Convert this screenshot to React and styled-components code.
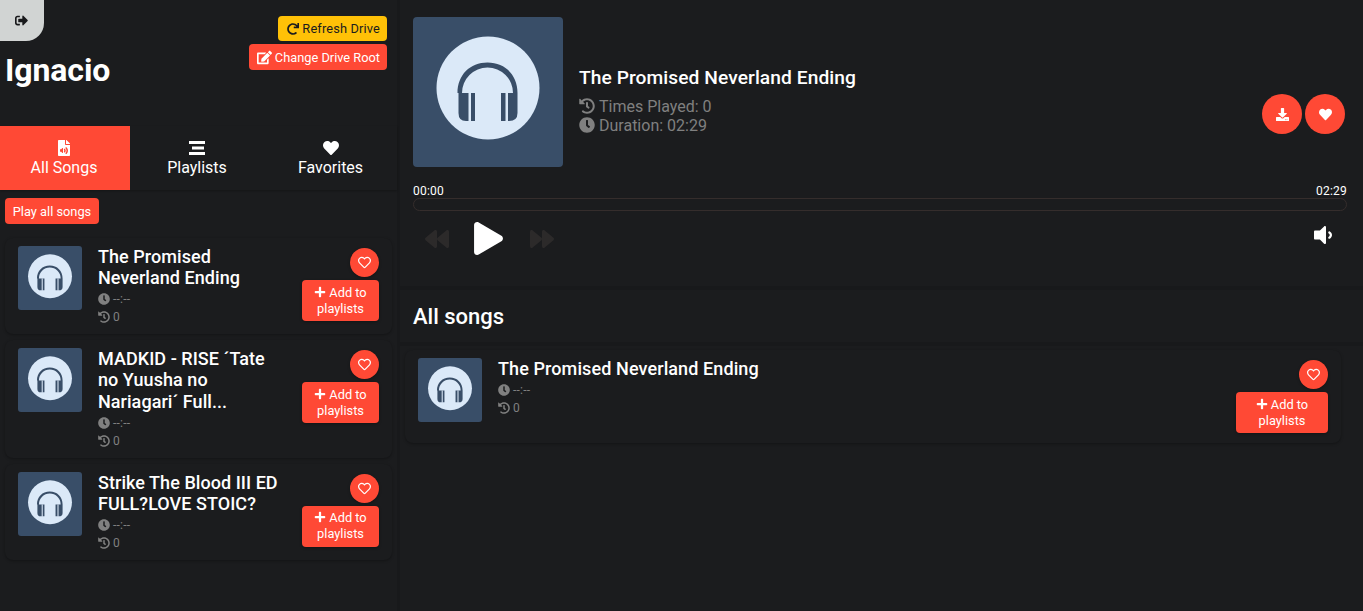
import React from "react";
import styled, { createGlobalStyle } from "styled-components";
import {
  FaBackward,
  FaClock,
  FaDownload,
  FaEdit,
  FaFileAudio,
  FaForward,
  FaHeart,
  FaHistory,
  FaPlay,
  FaPlus,
  FaRedo,
  FaRegHeart,
  FaSignOutAlt,
  FaVolumeDown,
} from "react-icons/fa";

const ACCENT = "#ff4935";
const MUTED = "#808080";
const PANEL = "#1b1c1e";
const COVER = "#394e68";
const COVER_LIGHT = "#dbe9f8";

const GlobalStyle = createGlobalStyle`
  html, body {
    margin: 0;
    height: 100%;
    background: ${PANEL};
    font-family: Roboto, "Liberation Sans", sans-serif;
    color: #fff;
    overflow: hidden;
  }
  * { box-sizing: border-box; }
`;

const Shell = styled.div`
  display: grid;
  grid-template-columns: 397px 1fr;
  gap: 3px;
  height: 611px;
  background: #18191b;
`;

const Sidebar = styled.aside`
  background: ${PANEL};
  min-width: 0;
`;

const Main = styled.main`
  background: #18191b;
  display: flex;
  flex-direction: column;
  gap: 4px;
  min-width: 0;
`;

const SideHeader = styled.header`
  height: 126px;
  display: flex;
  justify-content: space-between;
`;

const UserBlock = styled.div`
  display: flex;
  flex-direction: column;
`;

const LogoutButton = styled.button`
  width: 44px;
  height: 41px;
  border: 0;
  padding: 0 2px 1px 0;
  border-bottom-right-radius: 18px;
  background: #d1d4d3;
  color: #18191b;
  display: flex;
  align-items: center;
  justify-content: center;
  font-size: 13px;
`;

const UserName = styled.h1`
  margin: 10px 0 0 5px;
  font-size: 32px;
  line-height: 38px;
  font-weight: 700;
  letter-spacing: -0.1px;
`;

const DriveActions = styled.div`
  display: flex;
  flex-direction: column;
  align-items: flex-end;
  gap: 3px;
  padding: 16px 10px 0 0;
`;

const DriveButton = styled.button`
  height: ${(p) => (p.$warning ? 25 : 26)}px;
  border: 0;
  border-radius: 4px;
  padding: 0 7px 0 ${(p) => (p.$warning ? 9 : 8)}px;
  display: flex;
  align-items: center;
  gap: 3px;
  font: 400 12.8px Roboto, sans-serif;
  letter-spacing: ${(p) => (p.$warning ? 0.15 : 0)}px;
  background: ${(p) => (p.$warning ? "#ffc107" : ACCENT)};
  color: ${(p) => (p.$warning ? PANEL : "#fff")};
  svg { font-size: ${(p) => (p.$warning ? 12 : 15)}px; }
`;

const Tabs = styled.nav`
  display: grid;
  grid-template-columns: 130px 134px 133px;
  height: 64px;
  box-shadow: 0 1px 2px rgba(0, 0, 0, 0.25);
`;

const Tab = styled.div`
  display: flex;
  flex-direction: column;
  align-items: center;
  padding-top: 14px;
  padding-right: ${(p) => (p.$active ? 2 : 0)}px;
  font-size: 16px;
  line-height: 19px;
  background: ${(p) => (p.$active ? ACCENT : "transparent")};
  svg { font-size: 16px; display: block; margin-bottom: 2px; }
`;

const PlayAll = styled.button`
  display: block;
  margin: 8px 0 0 5px;
  height: 26px;
  width: 94px;
  padding: 0;
  border: 0;
  border-radius: 4px;
  background: ${ACCENT};
  color: #fff;
  font: 400 12.8px Roboto, sans-serif;
`;

const SongList = styled.div`
  display: flex;
  flex-direction: column;
  gap: 6px;
  margin: 14px 5px 0;
`;

const Card = styled.article`
  display: flex;
  align-items: flex-start;
  padding: 8px 13px;
  border-radius: 8px;
  background: #1b1c1e;
  box-shadow: 0 1px 3px rgba(0, 0, 0, 0.3);
`;

const CoverBox = styled.div`
  flex: none;
  width: ${(p) => p.$size}px;
  height: ${(p) => p.$size}px;
  border-radius: ${(p) => (p.$size > 100 ? 4 : 3)}px;
  background: ${COVER};
  display: flex;
  align-items: center;
  justify-content: center;
`;

const SongInfo = styled.div`
  flex: 1;
  min-width: 0;
  margin-left: 16px;
`;

const SongTitle = styled.h3`
  margin: 0 0 1.8px;
  max-width: ${(p) => (p.$wide ? "none" : "182px")};
  font-size: 18px;
  line-height: 21.2px;
  font-weight: 500;
  letter-spacing: ${(p) => (p.$wide ? 0.1 : 0.05)}px;
`;

const MetaRow = styled.div`
  display: flex;
  align-items: center;
  gap: 3px;
  height: 18px;
  font-size: 12px;
  letter-spacing: 0.2px;
  color: ${MUTED};
  svg { font-size: 12px; }
`;

const CardActions = styled.div`
  flex: none;
  display: flex;
  flex-direction: column;
  align-items: flex-end;
  gap: 3px;
  padding: 2px 0;
`;

const SmallHeart = styled.button`
  width: 29px;
  height: 29px;
  padding: 0;
  border: 0;
  border-radius: 50%;
  background: ${ACCENT};
  color: #fff;
  display: flex;
  align-items: center;
  justify-content: center;
  font-size: 13px;
  box-shadow: 0 1px 3px rgba(0, 0, 0, 0.3);
`;

const AddButton = styled.button`
  width: ${(p) => (p.$wide ? 92 : 77)}px;
  height: 41px;
  padding: 0 8px;
  border: 0;
  border-radius: 4px;
  background: ${ACCENT};
  color: #fff;
  font: 400 12.8px/16px Roboto, sans-serif;
  box-shadow: 0 1px 3px rgba(0, 0, 0, 0.3);
  svg { font-size: 12px; vertical-align: -1px; margin-right: 3px; }
`;

const Player = styled.section`
  height: 286px;
  padding: 17px 16px 0 13px;
  background: ${PANEL};
`;

const NowPlaying = styled.div`
  display: flex;
  align-items: center;
`;

const NowInfo = styled.div`
  flex: 1;
  margin-left: 16px;
  margin-top: 16px;
`;

const NowTitle = styled.h2`
  margin: 0 0 8px;
  font-size: 19.2px;
  line-height: 23px;
  font-weight: 500;
  letter-spacing: 0.07px;
`;

const NowMeta = styled.div`
  display: flex;
  align-items: center;
  gap: 4px;
  font-size: 16px;
  line-height: 19px;
  color: ${MUTED};
  svg { font-size: 16px; }
`;

const RoundActions = styled.div`
  display: flex;
  gap: 3px;
  margin: 44px 2px 0 0;
`;

const RoundButton = styled.button`
  width: 40px;
  height: 40px;
  padding: 0;
  border: 0;
  border-radius: 50%;
  background: ${ACCENT};
  color: #fff;
  display: flex;
  align-items: center;
  justify-content: center;
  font-size: 13px;
`;

const TimeRow = styled.div`
  display: flex;
  justify-content: space-between;
  margin-top: 17px;
  font-size: 12px;
  line-height: 14px;
  letter-spacing: 0.2px;
`;

const Track = styled.div`
  height: 13px;
  border: 1px solid #352d2c;
  border-radius: 7px;
`;

const Controls = styled.div`
  display: flex;
  align-items: center;
  justify-content: space-between;
  margin-top: 11px;
  padding: 0 12px;
`;

const Transport = styled.div`
  display: flex;
  align-items: center;
  gap: 25px;
`;

const Skip = styled.span`
  display: flex;
  font-size: 24px;
  color: #2c2a2a;
`;

const PlayGlyph = styled.span`
  display: flex;
  margin-left: -2px;
  font-size: 33px;
  color: #fff;
`;

const VolumeGlyph = styled.span`
  display: flex;
  font-size: 24px;
  margin-top: -8px;
  color: #fff;
`;

const ListHeading = styled.h2`
  margin: 0;
  height: 52px;
  padding-left: 13px;
  display: flex;
  align-items: center;
  font-size: 22px;
  font-weight: 500;
  background: ${PANEL};
`;

const ListPanel = styled.section`
  flex: 1;
  padding: 4px 22px 0 5px;
  background: ${PANEL};
`;

// cover placeholder, drawn on a 150 unit box so it scales for the thumbnails
const Headphones = ({ size }) => (
  <svg width={size} height={size} viewBox="0 0 150 150">
    <circle cx="75" cy="71" r="51.5" fill={COVER_LIGHT} />
    <path
      d="M44.5 76C44.5 58 57 45.5 74.5 45.5S104.5 58 104.5 76V96Q104.5 104 96 104H88V76H100A25.5 25.5 0 0 0 49 76H62V104H53Q45.5 104 45.5 96V76Z"
      fill={COVER}
    />
    <rect x="55.5" y="76" width="2.5" height="29" fill={COVER_LIGHT} />
    <rect x="92.5" y="76" width="2.5" height="29" fill={COVER_LIGHT} />
  </svg>
);

const PlaylistsIcon = () => (
  <svg width="16" height="16" viewBox="0 0 16 16" fill="currentColor">
    <rect x="0" y="1" width="16" height="3" />
    <rect x="3" y="6.5" width="12" height="3" />
    <rect x="0" y="12" width="16" height="3" />
  </svg>
);

const SongCard = ({ title, wide }) => (
  <Card>
    <CoverBox $size={64}>
      <Headphones size={64} />
    </CoverBox>
    <SongInfo>
      <SongTitle $wide={wide}>{title}</SongTitle>
      <MetaRow>
        <FaClock /> --:--
      </MetaRow>
      <MetaRow>
        <FaHistory /> 0
      </MetaRow>
    </SongInfo>
    <CardActions>
      <SmallHeart>
        <FaRegHeart />
      </SmallHeart>
      <AddButton $wide={wide}>
        <FaPlus />
        Add to playlists
      </AddButton>
    </CardActions>
  </Card>
);

const App = () => (
  <>
    <GlobalStyle />
    <Shell>
      <Sidebar>
        <SideHeader>
          <UserBlock>
            <LogoutButton>
              <FaSignOutAlt />
            </LogoutButton>
            <UserName>Ignacio</UserName>
          </UserBlock>
          <DriveActions>
            <DriveButton $warning>
              <FaRedo /> Refresh Drive
            </DriveButton>
            <DriveButton>
              <FaEdit /> Change Drive Root
            </DriveButton>
          </DriveActions>
        </SideHeader>
        <Tabs>
          <Tab $active>
            <FaFileAudio />
            All Songs
          </Tab>
          <Tab>
            <PlaylistsIcon />
            Playlists
          </Tab>
          <Tab>
            <FaHeart />
            Favorites
          </Tab>
        </Tabs>
        <PlayAll>Play all songs</PlayAll>
        <SongList>
          <SongCard title="The Promised Neverland Ending" />
          <SongCard title="MADKID - RISE ´Tate no Yuusha no Nariagari´ Full..." />
          <SongCard title="Strike The Blood III ED FULL?LOVE STOIC?" />
        </SongList>
      </Sidebar>
      <Main>
        <Player>
          <NowPlaying>
            <CoverBox $size={150}>
              <Headphones size={150} />
            </CoverBox>
            <NowInfo>
              <NowTitle>The Promised Neverland Ending</NowTitle>
              <NowMeta>
                <FaHistory /> Times Played: 0
              </NowMeta>
              <NowMeta>
                <FaClock /> Duration: 02:29
              </NowMeta>
            </NowInfo>
            <RoundActions>
              <RoundButton>
                <FaDownload />
              </RoundButton>
              <RoundButton>
                <FaHeart />
              </RoundButton>
            </RoundActions>
          </NowPlaying>
          <TimeRow>
            <span>00:00</span>
            <span>02:29</span>
          </TimeRow>
          <Track />
          <Controls>
            <Transport>
              <Skip>
                <FaBackward />
              </Skip>
              <PlayGlyph>
                <FaPlay />
              </PlayGlyph>
              <Skip>
                <FaForward />
              </Skip>
            </Transport>
            <VolumeGlyph>
              <FaVolumeDown />
            </VolumeGlyph>
          </Controls>
        </Player>
        <ListHeading>All songs</ListHeading>
        <ListPanel>
          <SongCard title="The Promised Neverland Ending" wide />
        </ListPanel>
      </Main>
    </Shell>
  </>
);

export default App;
